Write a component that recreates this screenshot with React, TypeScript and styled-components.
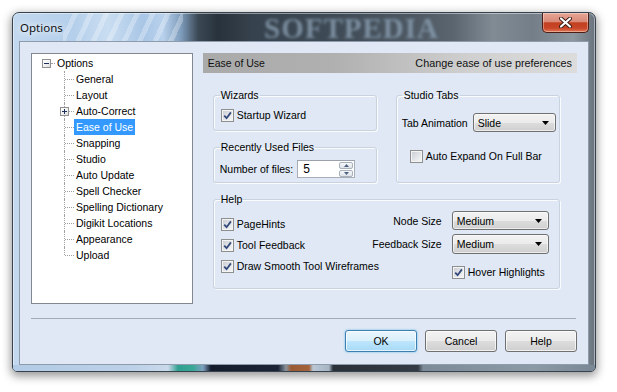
import React from "react";
import styled, { createGlobalStyle } from "styled-components";

const GlobalStyle = createGlobalStyle`
  html, body {
    margin: 0;
    padding: 0;
    background: #fff;
  }
  body {
    font-family: "Liberation Sans", Arial, sans-serif;
    font-size: 10.5px;
    color: #000;
  }
  #root {
    width: 617px;
    height: 392px;
    overflow: hidden;
  }
`;

const Page = styled.div`
  width: 617px;
  height: 392px;
  box-sizing: border-box;
  padding: 12px 0 0 12px;
`;

const Window = styled.div`
  width: 584px;
  height: 360px;
  box-sizing: border-box;
  display: flex;
  flex-direction: column;
  overflow: hidden;
  border: 1px solid #36434f;
  border-radius: 7px 7px 5px 5px;
  box-shadow: 0 3px 10px 1px rgba(0, 0, 0, 0.42), inset 0 0 0 1px rgba(255, 255, 255, 0.45);
  background: linear-gradient(
    90deg,
    #c3d9ef 0px,
    #b4cfeb 60px,
    #c9ddf1 95px,
    #a9c6e6 130px,
    #b8d1ec 150px,
    #7e9cbc 168px,
    #3b4955 185px,
    #28323c 205px,
    #36424d 240px,
    #3e4a55 320px,
    #4d5863 400px,
    #5a6570 440px,
    #808b94 480px,
    #737e88 520px,
    #8d979f 560px,
    #66717b 584px
  );
`;

const TitleBar = styled.div`
  position: relative;
  height: 28px;
  flex: none;
  display: flex;
  align-items: center;
  padding-left: 7px;
  background: repeating-linear-gradient(
      115deg,
      rgba(255, 255, 255, 0) 0 9px,
      rgba(255, 255, 255, 0.28) 9px 14px
    )
    50px 0 / 120px 100% no-repeat;
`;

const Watermark = styled.span`
  position: absolute;
  left: 251px;
  top: 1px;
  font-family: "Liberation Serif", "Times New Roman", serif;
  font-weight: bold;
  font-size: 29px;
  line-height: 29px;
  letter-spacing: 1px;
  color: #8b9fb2;
  opacity: 0.8;
  filter: blur(1.4px);
  pointer-events: none;
`;

const Title = styled.span`
  position: relative;
  font-family: "Noto Sans", "Open Sans", sans-serif;
  font-size: 11.5px;
  color: #111;
  text-shadow: 0 0 6px rgba(255, 255, 255, 0.95), 0 0 10px rgba(255, 255, 255, 0.8);
`;

const CloseButton = styled.div`
  position: relative;
  margin-left: auto;
  margin-right: 6px;
  align-self: flex-start;
  width: 47px;
  height: 20px;
  box-sizing: border-box;
  border: 1px solid #4d1c14;
  border-top: none;
  border-radius: 0 0 5px 5px;
  display: flex;
  align-items: center;
  justify-content: center;
  background: linear-gradient(
    #e7a595 0%,
    #d98a78 45%,
    #c3401f 52%,
    #c8462a 80%,
    #e27a55 100%
  );
  box-shadow: inset 0 0 0 1px rgba(255, 255, 255, 0.35);
`;

const Client = styled.div`
  flex: none;
  height: 324px;
  margin: 0 6px;
  box-sizing: border-box;
  border: 1px solid #8d9bab;
  background: #dfe8f4;
  padding: 11px 11px 0 11px;
  display: flex;
  flex-direction: column;
`;

const BottomFrame = styled.div`
  flex: 1;
  background: linear-gradient(
    90deg,
    #b3cbe5 0px,
    #bcd1e8 120px,
    #cad9ea 155px,
    #2fa090 165px,
    #3aa896 180px,
    #7fa0c0 190px,
    #141c2c 198px,
    #1b2335 265px,
    #8a949e 273px,
    #9a5a35 278px,
    #a3623a 296px,
    #b9c7d6 300px,
    #a8b6c4 316px,
    #2a3038 320px,
    #343b44 405px,
    #7d8a97 410px,
    #8c9aa6 520px,
    #7a8794 582px
  );
`;

const TopRow = styled.div`
  display: flex;
  gap: 10px;
  align-items: flex-start;
`;

/* ---------- tree ---------- */

const TreeBox = styled.div`
  width: 162px;
  height: 251px;
  box-sizing: border-box;
  border: 1px solid #828790;
  background: #fff;
  padding-top: 1px;
`;

const RootRow = styled.div`
  display: flex;
  align-items: center;
  height: 16px;
  padding-left: 10px;
`;

const Expander = styled.span<{ $plus?: boolean }>`
  position: relative;
  width: 9px;
  height: 9px;
  box-sizing: border-box;
  flex: none;
  border: 1px solid #919191;
  background: linear-gradient(135deg, #ffffff 0%, #f0f0f0 60%, #d8d8d8 100%);
  &::before {
    content: "";
    position: absolute;
    left: 1px;
    top: 3px;
    width: 5px;
    height: 1px;
    background: #1c2f5e;
  }
  &::after {
    content: "";
    display: ${(p) => (p.$plus ? "block" : "none")};
    position: absolute;
    left: 3px;
    top: 1px;
    width: 1px;
    height: 5px;
    background: #1c2f5e;
  }
`;

const RootConnector = styled.span`
  width: 4px;
  height: 0;
  border-top: 1px dotted #a0a0a0;
`;

const NodeLabel = styled.span<{ $selected?: boolean }>`
  display: inline-block;
  height: 16px;
  line-height: 16px;
  padding: 0 2px;
  white-space: nowrap;
  background: ${(p) => (p.$selected ? "#3399ff" : "transparent")};
  color: ${(p) => (p.$selected ? "#fff" : "#000")};
`;

const ChildRow = styled.div<{ $last?: boolean }>`
  position: relative;
  height: 16px;
  padding-left: 42px;
  &::before {
    content: "";
    position: absolute;
    left: 32px;
    top: 0;
    height: ${(p) => (p.$last ? "8px" : "16px")};
    border-left: 1px dotted #a0a0a0;
  }
  &::after {
    content: "";
    position: absolute;
    left: 33px;
    top: 8px;
    width: 9px;
    border-top: 1px dotted #a0a0a0;
  }
`;

const ChildExpander = styled(Expander)`
  position: absolute;
  left: 28px;
  top: 4px;
  z-index: 1;
`;

/* ---------- right pane ---------- */

const RightPane = styled.div`
  width: 375px;
`;

const HeaderBar = styled.div`
  height: 20px;
  display: flex;
  align-items: center;
  justify-content: space-between;
  padding: 0 5px;
  color: #111;
  background: linear-gradient(90deg, #aaaaaa 0%, #b0b0b0 35%, #d0d0d0 72%, #dcdcdc 100%);
`;

const HeaderHint = styled.span`
  font-size: 10.8px;
`;

const Groups = styled.div`
  display: grid;
  grid-template-columns: 164px 164px;
  grid-template-rows: 42px 42px 96px;
  column-gap: 19px;
  row-gap: 10px;
  padding: 16px 0 0 10px;
`;

const Group = styled.fieldset<{ $col?: string; $row?: string }>`
  grid-column: ${(p) => p.$col ?? "auto"};
  grid-row: ${(p) => p.$row ?? "auto"};
  margin: 0;
  padding: 0 6px;
  min-width: 0;
  box-sizing: border-box;
  border: 1px solid #c8d3df;
  border-radius: 3px;
  box-shadow: inset 1px 1px 0 rgba(255, 255, 255, 0.8), 1px 1px 0 rgba(255, 255, 255, 0.8);
  legend {
    padding: 0 1px;
    line-height: 13px;
  }
`;

const StudioGroup = styled(Group)`
  padding: 0 3px 0 5px;
  legend {
    padding: 0 2px;
  }
`;

const GroupBody = styled.div<{ $top: number }>`
  padding-top: ${(p) => p.$top}px;
  display: flex;
  flex-direction: column;
`;

const CheckRow = styled.div<{ $indent?: number; $top?: number }>`
  display: flex;
  align-items: center;
  gap: 3px;
  height: 13px;
  line-height: 13px;
  margin-left: ${(p) => p.$indent ?? 0}px;
  margin-top: ${(p) => p.$top ?? 0}px;
  white-space: nowrap;
`;

const Box = styled.span`
  width: 13px;
  height: 13px;
  box-sizing: border-box;
  flex: none;
  border: 1px solid #8e8f8f;
  background: linear-gradient(135deg, #c6cad0 0%, #e4e6e9 55%, #f7f7f7 100%);
  box-shadow: inset 0 0 0 1px #f4f4f4;
  display: flex;
  align-items: center;
  justify-content: center;
`;

const FieldRow = styled.div<{ $start?: boolean }>`
  display: flex;
  align-items: center;
  justify-content: ${(p) => (p.$start ? "flex-start" : "space-between")};
  white-space: nowrap;
`;

const Spin = styled.div`
  width: 58px;
  height: 18px;
  box-sizing: border-box;
  margin-left: 4px;
  border: 1px solid #a7aeb7;
  border-top-color: #9aa1aa;
  background: #fff;
  display: flex;
  align-items: center;
  padding: 0 1px 0 5px;
  font-size: 12px;
`;

const SpinValue = styled.span`
  flex: 1;
`;

const SpinButtons = styled.div`
  display: flex;
  flex-direction: column;
  gap: 1px;
`;

const SpinButton = styled.div`
  width: 14px;
  height: 7px;
  box-sizing: border-box;
  border: 1px solid #a9b1bb;
  border-radius: 2px;
  background: linear-gradient(#f6f8fa, #dde3ea);
  display: flex;
  align-items: center;
  justify-content: center;
`;

const Combo = styled.div<{ $w: number; $h: number }>`
  width: ${(p) => p.$w}px;
  height: ${(p) => p.$h}px;
  box-sizing: border-box;
  border: 1px solid #707070;
  border-radius: 3px;
  background: linear-gradient(#f2f2f2 0%, #ebebeb 50%, #dddddd 50%, #cfcfcf 100%);
  box-shadow: inset 0 0 0 1px rgba(255, 255, 255, 0.6);
  display: flex;
  align-items: center;
  justify-content: space-between;
  padding: 0 6px 0 4px;
  flex: none;
`;

/* left checks and right size controls share one cell: their rows interleave */
const HelpBody = styled.div`
  display: grid;
  grid-template-columns: 1fr;
  padding-right: 4px;
  & > * {
    grid-area: 1 / 1;
  }
`;

const HelpChecks = styled.div`
  display: flex;
  flex-direction: column;
  gap: 8px;
  padding: 12px 0 0 1px;
  justify-self: start;
`;

const SizeGrid = styled.div`
  display: grid;
  grid-template-columns: auto 97px;
  column-gap: 10px;
  row-gap: 4px;
  align-items: center;
  padding-top: 5px;
  justify-self: end;
  align-self: start;
`;

const SizeLabel = styled.span`
  justify-self: end;
  white-space: nowrap;
`;

const HoverCell = styled.div`
  grid-column: 2;
  margin-top: 8px;
`;

/* ---------- footer ---------- */

const Separator = styled.div`
  margin-top: 14px;
  margin-right: 1px;
  border-top: 1px solid #a3acb6;
`;

const ButtonRow = styled.div`
  display: flex;
  justify-content: flex-end;
  gap: 8px;
  margin-top: 11px;
`;

const DialogButton = styled.div<{ $default?: boolean }>`
  width: 72px;
  height: 22px;
  box-sizing: border-box;
  border-radius: 3px;
  display: flex;
  align-items: center;
  justify-content: center;
  border: 1px solid ${(p) => (p.$default ? "#3c7fb1" : "#707070")};
  background: ${(p) =>
    p.$default
      ? "linear-gradient(#eaf6fd 0%, #d9f0fc 50%, #bee6fd 50%, #a7d9f5 100%)"
      : "linear-gradient(#f2f2f2 0%, #ebebeb 50%, #dddddd 50%, #cfcfcf 100%)"};
  box-shadow: inset 0 0 0 1px rgba(255, 255, 255, 0.7)
    ${(p) => (p.$default ? ", 0 0 2px rgba(60, 160, 230, 0.8)" : "")};
`;

/* ---------- small drawings ---------- */

const Check = () => (
  <svg width="9" height="9" viewBox="0 0 9 9">
    <path d="M1.2 4.6 L3.6 7.2 L7.9 1.4" fill="none" stroke="#34497c" strokeWidth="1.8" />
  </svg>
);

const CheckBox = ({ checked }: { checked?: boolean }) => <Box>{checked && <Check />}</Box>;

const DownArrow = () => (
  <svg width="7" height="4" viewBox="0 0 7 4">
    <path d="M0 0 H7 L3.5 4 Z" fill="#000" />
  </svg>
);

const SpinArrow = ({ up }: { up?: boolean }) => (
  <svg width="5" height="3" viewBox="0 0 5 3">
    <path d={up ? "M0 3 H5 L2.5 0 Z" : "M0 0 H5 L2.5 3 Z"} fill="#4c607f" />
  </svg>
);

const CloseGlyph = () => (
  <svg width="13" height="11" viewBox="0 0 13 11">
    <path d="M2 1.5 L11 9.5 M11 1.5 L2 9.5" stroke="#3a1a14" strokeWidth="4" strokeLinecap="round" />
    <path d="M2 1.5 L11 9.5 M11 1.5 L2 9.5" stroke="#fff" strokeWidth="2.2" strokeLinecap="round" />
  </svg>
);

const treeItems = [
  "General",
  "Layout",
  "Auto-Correct",
  "Ease of Use",
  "Snapping",
  "Studio",
  "Auto Update",
  "Spell Checker",
  "Spelling Dictionary",
  "Digikit Locations",
  "Appearance",
  "Upload",
];

function App() {
  return (
    <>
      <GlobalStyle />
      <Page>
        <Window>
          <TitleBar>
            <Watermark>SOFTPEDIA</Watermark>
            <Title>Options</Title>
            <CloseButton>
              <CloseGlyph />
            </CloseButton>
          </TitleBar>
          <Client>
            <TopRow>
              <TreeBox>
                <RootRow>
                  <Expander />
                  <RootConnector />
                  <NodeLabel>Options</NodeLabel>
                </RootRow>
                {treeItems.map((item, i) => (
                  <ChildRow key={item} $last={i === treeItems.length - 1}>
                    {item === "Auto-Correct" && <ChildExpander $plus />}
                    <NodeLabel $selected={item === "Ease of Use"}>{item}</NodeLabel>
                  </ChildRow>
                ))}
              </TreeBox>
              <RightPane>
                <HeaderBar>
                  <span>Ease of Use</span>
                  <HeaderHint>Change ease of use preferences</HeaderHint>
                </HeaderBar>
                <Groups>
                  <Group $col="1" $row="1">
                    <legend>Wizards</legend>
                    <GroupBody $top={7}>
                      <CheckRow $indent={1}>
                        <CheckBox checked />
                        <span>Startup Wizard</span>
                      </CheckRow>
                    </GroupBody>
                  </Group>
                  <Group $col="1" $row="2">
                    <legend>Recently Used Files</legend>
                    <GroupBody $top={6}>
                      <FieldRow $start>
                        <span>Number of files:</span>
                        <Spin>
                          <SpinValue>5</SpinValue>
                          <SpinButtons>
                            <SpinButton>
                              <SpinArrow up />
                            </SpinButton>
                            <SpinButton>
                              <SpinArrow />
                            </SpinButton>
                          </SpinButtons>
                        </Spin>
                      </FieldRow>
                    </GroupBody>
                  </Group>
                  <StudioGroup $col="2" $row="1 / 3">
                    <legend>Studio Tabs</legend>
                    <GroupBody $top={11}>
                      <FieldRow>
                        <span>Tab Animation</span>
                        <Combo $w={83} $h={19}>
                          <span>Slide</span>
                          <DownArrow />
                        </Combo>
                      </FieldRow>
                      <CheckRow $indent={8} $top={18}>
                        <CheckBox />
                        <span>Auto Expand On Full Bar</span>
                      </CheckRow>
                    </GroupBody>
                  </StudioGroup>
                  <Group $col="1 / 3" $row="3">
                    <legend>Help</legend>
                    <HelpBody>
                      <HelpChecks>
                        <CheckRow>
                          <CheckBox checked />
                          <span>PageHints</span>
                        </CheckRow>
                        <CheckRow>
                          <CheckBox checked />
                          <span>Tool Feedback</span>
                        </CheckRow>
                        <CheckRow>
                          <CheckBox checked />
                          <span>Draw Smooth Tool Wireframes</span>
                        </CheckRow>
                      </HelpChecks>
                      <SizeGrid>
                        <SizeLabel>Node Size</SizeLabel>
                        <Combo $w={97} $h={19}>
                          <span>Medium</span>
                          <DownArrow />
                        </Combo>
                        <SizeLabel>Feedback Size</SizeLabel>
                        <Combo $w={97} $h={20}>
                          <span>Medium</span>
                          <DownArrow />
                        </Combo>
                        <HoverCell>
                          <CheckRow>
                            <CheckBox checked />
                            <span>Hover Highlights</span>
                          </CheckRow>
                        </HoverCell>
                      </SizeGrid>
                    </HelpBody>
                  </Group>
                </Groups>
              </RightPane>
            </TopRow>
            <Separator />
            <ButtonRow>
              <DialogButton $default>OK</DialogButton>
              <DialogButton>Cancel</DialogButton>
              <DialogButton>Help</DialogButton>
            </ButtonRow>
          </Client>
          <BottomFrame />
        </Window>
      </Page>
    </>
  );
}

export default App;
